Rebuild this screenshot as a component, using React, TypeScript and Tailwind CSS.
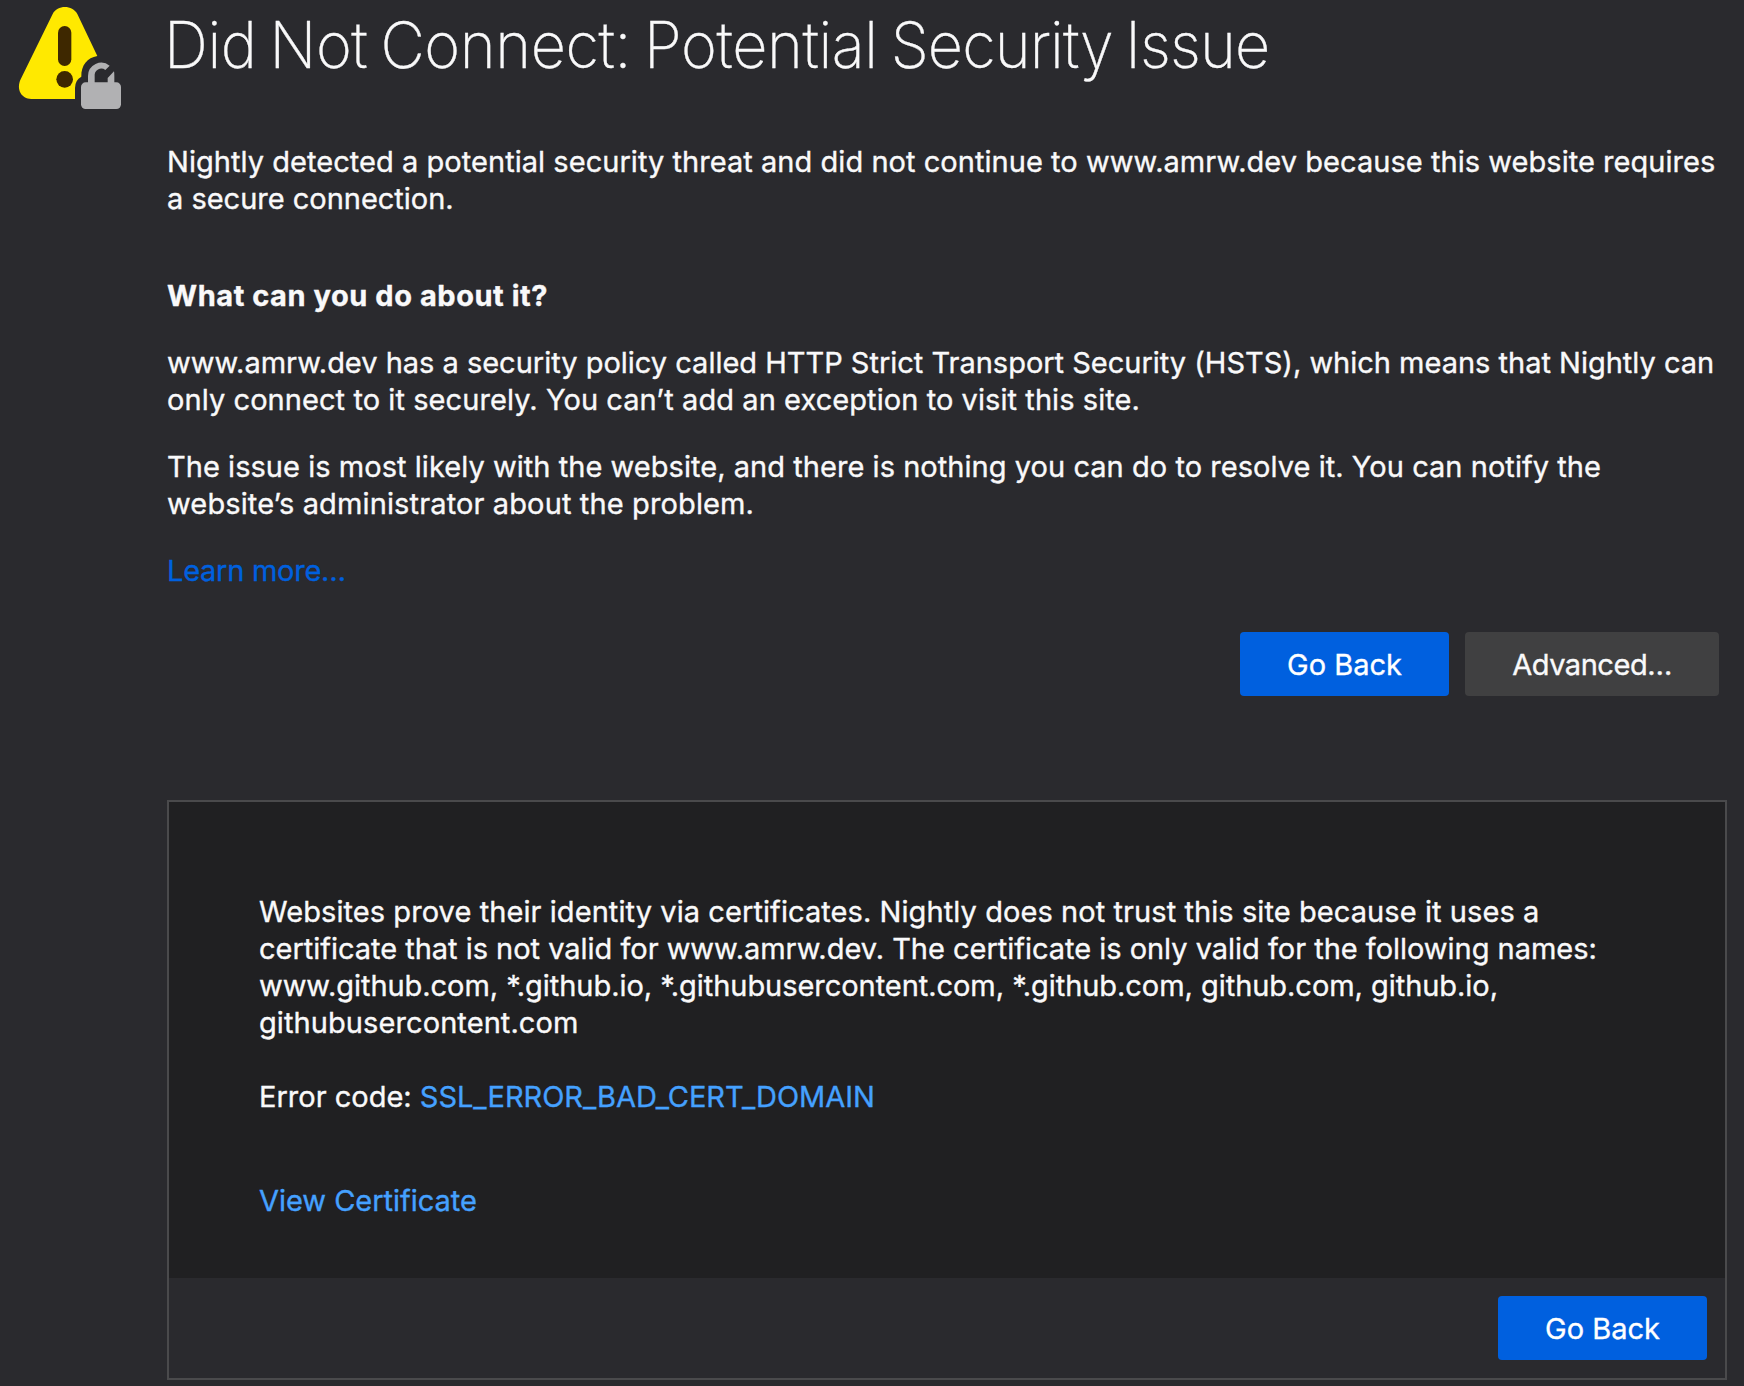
import type { ReactNode } from "react";

function WarningIcon() {
  return (
    <svg viewBox="0 0 420 360" className="block h-[120px] w-[140px]" aria-hidden="true">
      <path
        fill="#ffe900"
        d="M62 238 L158 42 C172 14 217 14 232 42 L292 168 C262 173 243 196 244 230 Q225 240 225 264 L225 297 L94 297 C64 297 48 268 62 238 Z"
      />
      <rect x="174" y="78" width="40" height="120" rx="20" fill="#3e2800" />
      <circle cx="194" cy="238" r="25" fill="#3e2800" />
      <rect x="243" y="247" width="120" height="80" rx="14" fill="#b1b1b3" />
      <path
        fill="#b1b1b3"
        d="M264 250 V228 A40 40 0 0 1 329 197 L316 210 A20 20 0 0 0 284 228 V250 Z M323 250 V234 L342 214 Q343 218 343 228 V250 Z"
      />
    </svg>
  );
}

function Line({ className, children }: { className: string; children: ReactNode }) {
  return <span className={`block whitespace-nowrap ${className}`}>{children}</span>;
}

function Button({ className, children }: { className: string; children: ReactNode }) {
  return (
    <button type="button" className={`h-16 rounded-[4px] pt-px text-center leading-[37px] whitespace-nowrap ${className}`}>
      {children}
    </button>
  );
}

export default function App() {
  return (
    <div className="flex min-h-[1386px] w-[1744px] bg-[#2a2a2e] font-['Inter',sans-serif] text-[29px] leading-[37px] text-[#f9f9fa] [-webkit-text-stroke:0.35px]">
      <div className="w-[167px] shrink-0">
        <WarningIcon />
      </div>
      <main className="w-[1560px] pt-[5px]">
        <h1 className="-ml-[3px] origin-left scale-x-[0.955] text-[64px] leading-[80px] font-extralight tracking-[-0.4px] whitespace-nowrap [word-spacing:-4px]">
          Did Not Connect: Potential <span className="tracking-[-0.9px]">Security Issue</span>
        </h1>
        <p className="mt-[58px]">
          <Line className="tracking-[0.043px]">
            Nightly detected a potential security threat and did not continue to www.amrw.dev because this website requires
          </Line>
          <Line className="tracking-[-0.016px]">a secure connection.</Line>
        </p>
        <h2 className="mt-[60px] font-bold tracking-[0.55px]">What can you do about it?</h2>
        <p className="mt-[30px]">
          <Line className="tracking-[-0.009px]">
            www.amrw.dev has a security policy called HTTP Strict Transport Security (HSTS), which means that Nightly can
          </Line>
          <Line className="tracking-[0.07px]">
            only connect to it securely. You can’t add an exception to visit this site.
          </Line>
        </p>
        <p className="mt-[30px]">
          <Line className="tracking-[0.043px]">
            The issue is most likely with the website, and there is nothing you can do to resolve it. You can notify the
          </Line>
          <Line className="tracking-[0.13px]">website’s administrator about the problem.</Line>
        </p>
        <p className="mt-[30px]">
          <a className="tracking-[-0.26px] text-[#0060df]">Learn more…</a>
        </p>
        <div className="mt-[43px] mr-2 flex justify-end gap-4">
          <Button className="w-[209px] bg-[#0060df] text-white">Go Back</Button>
          <Button className="w-[254px] bg-[#404041] tracking-[-0.45px]">Advanced…</Button>
        </div>
        <section className="mt-[104px] border-2 border-[#4a4a4c]">
          <div className="bg-[#202022] pt-[91px] pb-[59px] pl-[90px]">
            <p>
              <Line className="tracking-[0.077px]">
                Websites prove their identity via certificates. Nightly does not trust this site because it uses a
              </Line>
              <Line className="tracking-[-0.024px]">
                certificate that is not valid for www.amrw.dev. The certificate is only valid for the following names:
              </Line>
              <Line className="tracking-[-0.047px]">
                www.github.com, *.github.io, *.githubusercontent.com, *.github.com, github.com, github.io,
              </Line>
              <Line className="tracking-[0.086px]">githubusercontent.com</Line>
            </p>
            <p className="mt-[37px]">
              Error code: <a className="tracking-[-0.04px] text-[#45a1ff]">SSL_ERROR_BAD_CERT_DOMAIN</a>
            </p>
            <p className="mt-[67px]">
              <a className="tracking-[-0.025px] text-[#45a1ff]">View Certificate</a>
            </p>
          </div>
          <div className="flex justify-end p-[18px]">
            <Button className="w-[209px] bg-[#0060df] text-white">Go Back</Button>
          </div>
        </section>
      </main>
    </div>
  );
}
